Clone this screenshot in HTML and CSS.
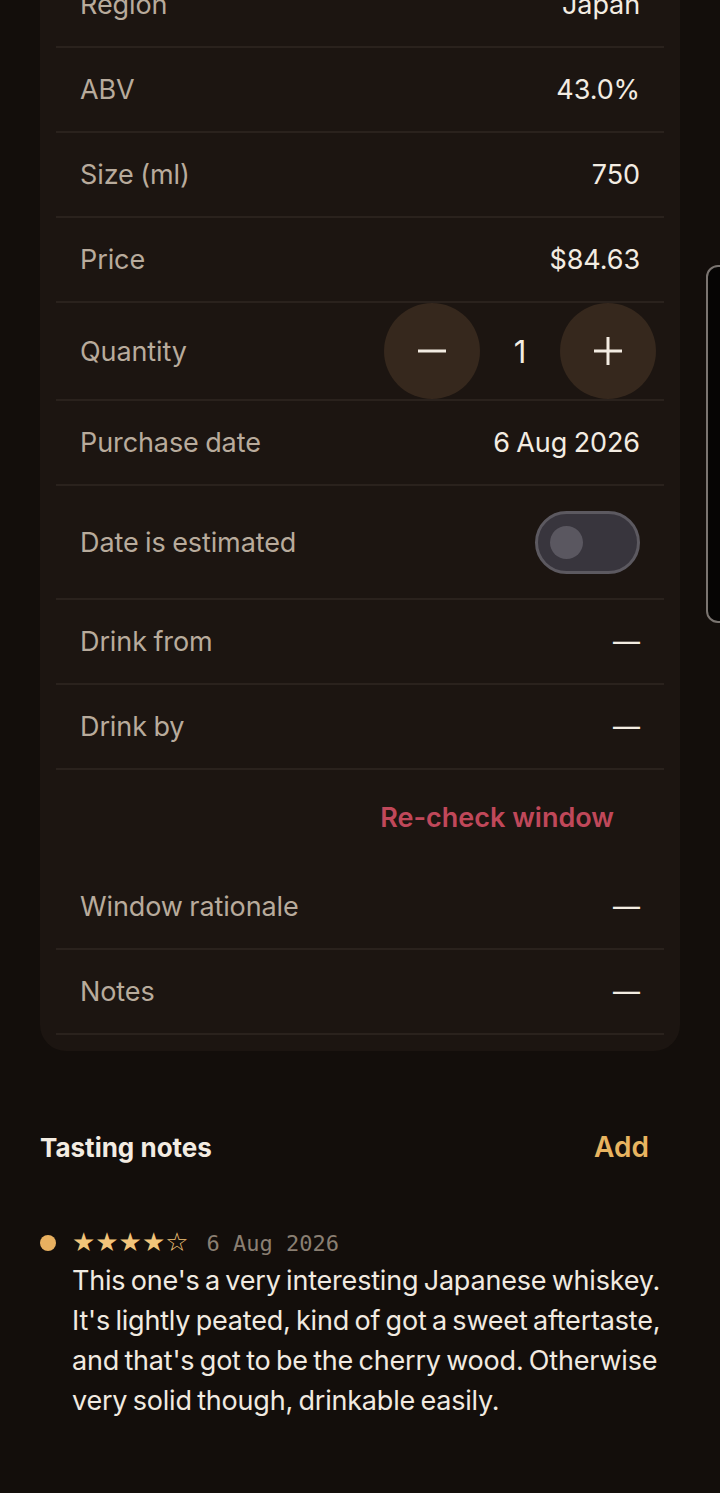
FILE: index.html
```html
<!DOCTYPE html>
<html lang="en">
<head>
    <meta charset="UTF-8">
    <meta name="viewport" content="width=device-width, initial-scale=1.0">
    <title>Bottle</title>
    <link rel="stylesheet" href="styles.css">
</head>
<body>
    <div class="page">
        <div class="card">
            <div class="row first">
                <span class="label">Region</span>
                <span class="value">Japan</span>
            </div>
            <div class="row">
                <span class="label">ABV</span>
                <span class="value">43.0%</span>
            </div>
            <div class="row">
                <span class="label">Size (ml)</span>
                <span class="value">750</span>
            </div>
            <div class="row">
                <span class="label">Price</span>
                <span class="value">$84.63</span>
            </div>
            <div class="row qty-row">
                <span class="label">Quantity</span>
                <div class="stepper">
                    <button class="step-btn" aria-label="Decrease">
                        <svg width="30" height="30" viewBox="0 0 30 30"><path d="M1 15h28" stroke="#f3ece2" stroke-width="3"/></svg>
                    </button>
                    <span class="qty">1</span>
                    <button class="step-btn" aria-label="Increase">
                        <svg width="30" height="30" viewBox="0 0 30 30"><path d="M1 15h28M15 1v28" stroke="#f3ece2" stroke-width="3"/></svg>
                    </button>
                </div>
            </div>
            <div class="row">
                <span class="label">Purchase date</span>
                <span class="value">6 Aug 2026</span>
            </div>
            <div class="row toggle-row">
                <span class="label">Date is estimated</span>
                <div class="toggle"><div class="knob"></div></div>
            </div>
            <div class="row">
                <span class="label">Drink from</span>
                <span class="value">—</span>
            </div>
            <div class="row">
                <span class="label">Drink by</span>
                <span class="value">—</span>
            </div>
            <div class="recheck">
                <button class="recheck-btn">Re-check window</button>
            </div>
            <div class="row">
                <span class="label">Window rationale</span>
                <span class="value">—</span>
            </div>
            <div class="row">
                <span class="label">Notes</span>
                <span class="value">—</span>
            </div>
        </div>

        <div class="section-head">
            <h2>Tasting notes</h2>
            <button class="add-btn">Add</button>
        </div>

        <div class="note">
            <span class="dot"></span>
            <div class="note-body">
                <div class="note-meta">
                    <span class="stars">★★★★☆</span>
                    <span class="note-date">6 Aug 2026</span>
                </div>
                <p class="note-text">This one's a very interesting Japanese whiskey. It's lightly peated, kind of got a sweet aftertaste, and that's got to be the cherry wood. Otherwise very solid though, drinkable easily.</p>
            </div>
        </div>
    </div>
    <div class="edge-handle"></div>
</body>
</html>
```

FILE: styles.css
```css
body {
    margin: 0;
    background: #130e0b;
    font-family: Inter, "Noto Sans", sans-serif;
    color: #f3ece2;
    overflow: hidden;
}
button {
    font-family: inherit;
    border: none;
    background: none;
    cursor: pointer;
    padding: 0;
}
.page {
    padding: 0 40px;
}
.card {
    background: #1c1511;
    border-radius: 0 0 26px 26px;
    padding: 0 16px 16px;
    margin-top: -37px;
}
.row {
    display: flex;
    align-items: center;
    justify-content: space-between;
    height: 83px;
    padding: 0 24px;
    border-bottom: 2px solid #2a221d;
}
.label {
    font-size: 27px;
    color: #b8ab9c;
    letter-spacing: -0.1px;
    word-spacing: -1px;
}
.value {
    font-size: 27px;
    color: #f3ece2;
    letter-spacing: -0.1px;
    word-spacing: -1px;
}
.qty-row {
    height: 96px;
}
.stepper {
    display: flex;
    align-items: center;
    margin-right: -16px;
}
.step-btn {
    width: 96px;
    height: 96px;
    border-radius: 50%;
    background: #36281d;
    display: flex;
    align-items: center;
    justify-content: center;
}
.qty {
    width: 80px;
    text-align: center;
    font-size: 31px;
    color: #f3ece2;
}
.toggle-row {
    height: 112px;
}
.toggle {
    box-sizing: content-box;
    width: 87px;
    height: 57px;
    padding-left: 12px;
    border: 3px solid #5c5960;
    border-radius: 32px;
    background: #38353d;
    display: flex;
    align-items: center;
}
.knob {
    width: 33px;
    height: 33px;
    border-radius: 50%;
    background: #5a5760;
}
.recheck {
    display: flex;
    justify-content: flex-end;
    align-items: center;
    height: 95px;
    padding-right: 50px;
}
.recheck-btn {
    font-size: 27px;
    font-weight: 600;
    color: #c0485a;
    letter-spacing: 0;
}
.section-head {
    display: flex;
    justify-content: space-between;
    align-items: center;
    margin-top: 79px;
    padding-right: 31px;
}
.section-head h2 {
    margin: 0;
    font-size: 26px;
    font-weight: 700;
    color: #f3ece2;
}
.add-btn {
    font-size: 28px;
    font-weight: 600;
    color: #e8b460;
}
.note {
    display: flex;
    align-items: flex-start;
    margin-top: 63px;
}
.dot {
    width: 16px;
    height: 16px;
    border-radius: 50%;
    background: #e8b060;
    margin-top: 8px;
    flex-shrink: 0;
}
.note-body {
    margin-left: 16px;
}
.note-meta {
    display: flex;
    align-items: baseline;
    gap: 18px;
    height: 34px;
}
.stars {
    font-family: "DejaVu Sans", sans-serif;
    font-size: 26px;
    color: #f2c47a;
    letter-spacing: 0;
}
.note-date {
    font-family: "DejaVu Sans Mono", monospace;
    font-size: 22px;
    color: #8a7f72;
}
.note-text {
    margin: 0;
    font-size: 27px;
    line-height: 40px;
    color: #f1eae0;
    letter-spacing: -0.2px;
    word-spacing: -2px;
}
.edge-handle {
    position: fixed;
    left: 706px;
    top: 265px;
    width: 30px;
    height: 354px;
    border: 2px solid #7a7470;
    border-radius: 12px;
    background: #060504;
}
```
